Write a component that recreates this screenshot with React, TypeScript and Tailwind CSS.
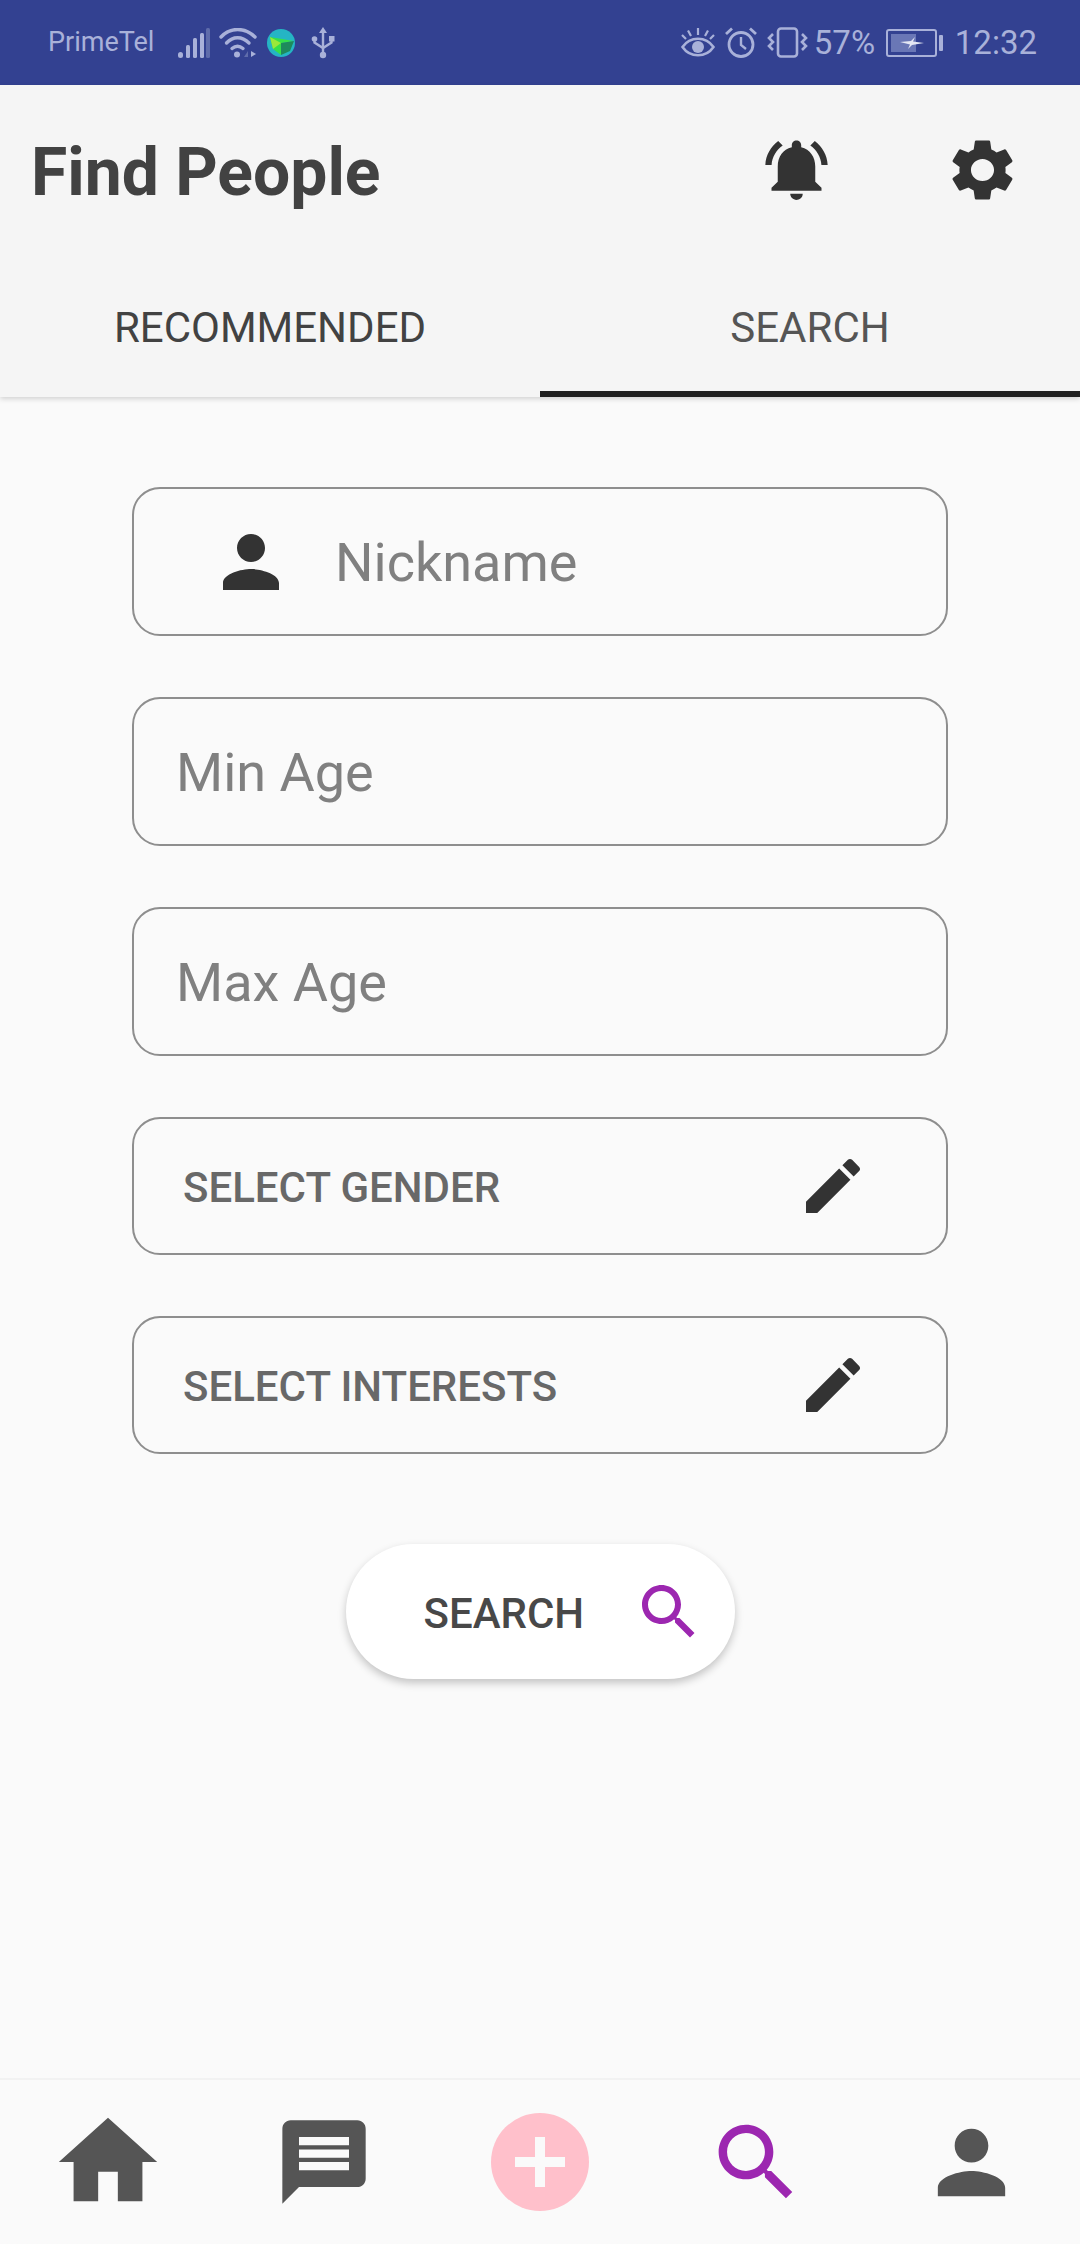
import React from "react";

const paths = {
    bell: "M7.58 4.08L6.15 2.65C3.75 4.48 2.17 7.3 2.03 10.5h2c.15-2.65 1.51-4.97 3.55-6.42zm12.39 6.42h2c-.15-3.2-1.73-6.02-4.12-7.85l-1.42 1.43c2.02 1.45 3.39 3.77 3.54 6.42zM18 11c0-3.07-1.64-5.64-4.5-6.32V4c0-.83-.67-1.5-1.5-1.5s-1.5.67-1.5 1.5v.68C7.63 5.36 6 7.92 6 11v5l-2 2v1h16v-1l-2-2v-5zm-6 11c.14 0 .27-.01.4-.04.65-.14 1.18-.58 1.44-1.18.1-.24.15-.5.15-.78h-4c.01 1.1.9 2 2.01 2z",
    gear: "M19.14 12.94c.04-.3.06-.61.06-.94 0-.32-.02-.64-.07-.94l2.03-1.58c.18-.14.23-.41.12-.61l-1.92-3.32c-.12-.22-.37-.29-.59-.22l-2.39.96c-.5-.38-1.03-.7-1.62-.94l-.36-2.54c-.04-.24-.24-.41-.48-.41h-3.84c-.24 0-.43.17-.47.41l-.36 2.54c-.59.24-1.13.57-1.62.94l-2.39-.96c-.22-.08-.47 0-.59.22L2.74 8.87c-.12.21-.08.47.12.61l2.03 1.58c-.05.3-.09.63-.09.94s.02.64.07.94l-2.03 1.58c-.18.14-.23.41-.12.61l1.92 3.32c.12.22.37.29.59.22l2.39-.96c.5.38 1.03.7 1.62.94l.36 2.54c.05.24.24.41.48.41h3.84c.24 0 .44-.17.47-.41l.36-2.54c.59-.24 1.13-.56 1.62-.94l2.39.96c.22.08.47 0 .59-.22l1.92-3.32c.12-.22.07-.47-.12-.61l-2.01-1.58zM12 15.6c-1.98 0-3.6-1.62-3.6-3.6s1.62-3.6 3.6-3.6 3.6 1.62 3.6 3.6-1.62 3.6-3.6 3.6z",
    person: "M12 12c2.21 0 4-1.79 4-4s-1.79-4-4-4-4 1.79-4 4 1.79 4 4 4zm0 2c-2.67 0-8 1.34-8 4v2h16v-2c0-2.66-5.33-4-8-4z",
    edit: "M3 17.25V21h3.75L17.81 9.94l-3.75-3.75L3 17.25zM20.71 7.04c.39-.39.39-1.02 0-1.41l-2.34-2.34c-.39-.39-1.02-.39-1.41 0l-1.83 1.83 3.75 3.75 1.83-1.83z",
    search: "M15.5 14h-.79l-.28-.27C15.41 12.59 16 11.11 16 9.5 16 5.91 13.09 3 9.5 3S3 5.91 3 9.5 5.91 16 9.5 16c1.61 0 3.09-.59 4.23-1.57l.27.28v.79l5 4.99L20.49 19l-4.99-5zm-6 0C7.01 14 5 11.99 5 9.5S7.01 5 9.5 5 14 7.01 14 9.5 11.99 14 9.5 14z",
    home: "M10 20v-6h4v6h5v-8h3L12 3 2 12h3v8z",
    message: "M20 2H4c-1.1 0-1.99.9-1.99 2L2 22l4-4h14c1.1 0 2-.9 2-2V4c0-1.1-.9-2-2-2zm-2 12H6v-2h12v2zm0-3H6V9h12v2zm0-3H6V6h12v2z",
};

function Icon({ d, className, stretch }: { d: string; className: string; stretch?: boolean }) {
    return (
        <svg
            viewBox="0 0 24 24"
            fill="currentColor"
            preserveAspectRatio={stretch ? "none" : undefined}
            className={className}
        >
            <path d={d} />
        </svg>
    );
}

function StatusBar() {
    return (
        <div className="h-[85px] bg-[#334191] text-[#a9b1d9] flex items-center justify-between pl-[48px] pr-[43px] font-['Roboto',sans-serif]">
            <div className="flex items-center">
                <span className="text-[27px] leading-none w-[130px]">PrimeTel</span>
                {/* signal */}
                <svg viewBox="0 0 32 30" className="w-[32px] h-[30px]">
                    <rect x="0" y="24" width="5" height="6" rx="2.5" fill="#a9b1d9" />
                    <rect x="8" y="17" width="4" height="13" rx="1.5" fill="#a9b1d9" />
                    <rect x="15" y="10" width="4" height="20" rx="1.5" fill="#a9b1d9" />
                    <rect x="22" y="5" width="4" height="25" rx="1.5" fill="#a9b1d9" />
                    <rect x="28" y="0" width="4" height="30" rx="1.5" fill="#5f6cab" />
                </svg>
                {/* wifi */}
                <svg viewBox="0 0 38 30" fill="none" stroke="#a9b1d9" strokeWidth="3.4" strokeLinecap="round" className="w-[38px] h-[30px] ml-[9px]">
                    <path d="M2 9C11 -1 26 -1 36 9" />
                    <path d="M7.5 15C14 8 23 8 30 15" />
                    <path d="M13 20.5C16.5 17.5 20.5 17.5 24 20.5" />
                    <circle cx="18" cy="26.5" r="3" fill="#a9b1d9" stroke="none" />
                    <path d="M29 29V23L25 29Z" fill="#5f6cab" stroke="none" />
                    <path d="M32 23V29L37 26Z" fill="#a9b1d9" stroke="none" />
                </svg>
                {/* vpn globe */}
                <svg viewBox="0 0 30 30" className="w-[30px] h-[30px] ml-[9px]">
                    <circle cx="15" cy="15" r="14" fill="#25b5c4" />
                    <path d="M4 9L28 13L16 15L15 27L7 21Z" fill="#35e04a" />
                    <path d="M15 15L28 13L24 23L15 27Z" fill="#1e8a5c" />
                    <path d="M4 9L15 15L7 21Z" fill="#9be83a" />
                </svg>
                {/* usb */}
                <svg viewBox="0 0 24 32" fill="none" stroke="#a9b1d9" strokeWidth="2.4" className="w-[24px] h-[32px] ml-[15px]">
                    <path d="M12 5V27" />
                    <path d="M12 0L16 6H8Z" fill="#a9b1d9" stroke="none" />
                    <circle cx="12" cy="28" r="3.2" fill="#a9b1d9" stroke="none" />
                    <circle cx="3.5" cy="12" r="2.8" fill="#a9b1d9" stroke="none" />
                    <rect x="18" y="9" width="5.5" height="5.5" fill="#a9b1d9" stroke="none" />
                    <path d="M3.5 13V15.5L12 21L20.5 15.5V13" />
                </svg>
            </div>
            <div className="flex items-center">
                {/* eye */}
                <svg viewBox="0 0 34 30" fill="none" stroke="#a9b1d9" strokeWidth="2.6" className="w-[34px] h-[30px]">
                    <path d="M1.5 19C9 8 25 8 32.5 19C25 30 9 30 1.5 19Z" />
                    <circle cx="17" cy="19" r="6" fill="#a9b1d9" stroke="none" />
                    <path d="M17 0V7M7 2.5L10 8M27 2.5L24 8M1 7L5 11M33 7L29 11" strokeWidth="2.2" />
                </svg>
                {/* alarm */}
                <svg viewBox="0 0 32 31" fill="none" stroke="#a9b1d9" strokeWidth="2.8" className="w-[32px] h-[31px] ml-[10px]">
                    <circle cx="16" cy="17.5" r="12" />
                    <path d="M16 10V18L21 22" strokeWidth="2.4" />
                    <path d="M1 7L7 1.5M31 7L25 1.5" />
                </svg>
                {/* vibrate */}
                <svg viewBox="0 0 41 31" fill="none" stroke="#a9b1d9" strokeWidth="2.6" className="w-[41px] h-[31px] ml-[10px]">
                    <rect x="11" y="1.5" width="19" height="28" rx="3" />
                    <path d="M6 7L2 11L6 15L2 19L6 23" />
                    <path d="M35 7L39 11L35 15L39 19L35 23" />
                </svg>
                <span className="text-[33px] leading-none ml-[6px] w-[72px]">57%</span>
                {/* battery */}
                <div className="flex items-center">
                    <div className="relative w-[51px] h-[28px] border-2 border-[#a9b1d9] rounded-[3px] p-[3px]">
                        <div className="w-[25px] h-full bg-[#6a77b6]" />
                        <svg viewBox="0 0 24 12" className="absolute left-[12px] top-[6px] w-[24px] h-[12px]">
                            <path d="M0 5L11 4L15 0L13 4.500L24 6L12 8L8 12L10 7.500Z" fill="#e4e7f4" />
                        </svg>
                    </div>
                    <div className="w-[4px] h-[16px] ml-[2px] bg-[#a9b1d9] rounded-[1px]" />
                </div>
                <span className="text-[33px] leading-none ml-[12px]">12:32</span>
            </div>
        </div>
    );
}

function Header() {
    return (
        <div className="bg-[#f5f5f5] shadow-[0_2px_5px_rgba(0,0,0,0.16)] relative">
            <div className="h-[169px] flex items-center justify-between pl-[31px] pr-[59px]">
                <h1 className="text-[66px] font-bold leading-none text-[#424242] mt-[7px]">Find People</h1>
                <div className="flex items-center gap-[110px] text-[#333333]">
                    <Icon d={paths.bell} className="w-[75px] h-[73px]" stretch />
                    <Icon d={paths.gear} className="w-[77px] h-[74px]" stretch />
                </div>
            </div>
            <div className="grid grid-cols-2 h-[143px]">
                <div className="flex items-center justify-center text-[42px] text-[#424242] pt-[10px] border-b-[6px] border-transparent">RECOMMENDED</div>
                <div className="flex items-center justify-center text-[42px] text-[#555555] pt-[10px] border-b-[6px] border-[#212121]">SEARCH</div>
            </div>
        </div>
    );
}

function TextField({ label, withIcon }: { label: string; withIcon?: boolean }) {
    return (
        <div className="h-[149px] flex items-center border-2 border-[#8e8e8e] rounded-[28px] pl-[42px]">
            {withIcon && (
                <Icon d={paths.person} className="w-[84px] h-[84px] text-[#333333] ml-[33px] mr-[42px]" />
            )}
            <span className="text-[54px] text-[#808080] mt-[2px]">{label}</span>
        </div>
    );
}

function SelectField({ label }: { label: string }) {
    return (
        <div className="h-[138px] flex items-center justify-between border-2 border-[#8e8e8e] rounded-[28px] pl-[49px] pr-[77px]">
            <span className="text-[42px] font-medium text-[#686868] mt-[3px]">{label}</span>
            <Icon d={paths.edit} className="w-[72px] h-[72px] text-[#333333] -mt-[1px]" />
        </div>
    );
}

function BottomNav() {
    return (
        <div className="h-[166px] border-t-2 border-[#f2f2f2] grid grid-cols-5 items-center text-[#555555]">
            <div className="flex justify-center">
                <Icon d={paths.home} className="w-[118px] h-[118px]" />
            </div>
            <div className="flex justify-center">
                <Icon d={paths.message} className="w-[100px] h-[100px]" />
            </div>
            <div className="flex justify-center">
                <div className="relative w-[98px] h-[98px] rounded-full bg-[#ffc0cb] flex items-center justify-center">
                    <div className="w-[50px] h-[10px] bg-[#fafafa]" />
                    <div className="absolute w-[10px] h-[50px] bg-[#fafafa]" />
                </div>
            </div>
            <div className="flex justify-center">
                <Icon d={paths.search} className="w-[101px] h-[101px] text-[#9c27b0]" />
            </div>
            <div className="flex justify-center pr-[2px]">
                <Icon d={paths.person} className="w-[101px] h-[101px]" />
            </div>
        </div>
    );
}

export default function App() {
    return (
        <div className="w-[1080px] h-[2244px] flex flex-col bg-[#fafafa] font-['Roboto',sans-serif] overflow-hidden">
            <StatusBar />
            <Header />
            <div className="flex-1 px-[132px] pt-[90px] flex flex-col">
                <div className="flex flex-col gap-[61px]">
                    <TextField label="Nickname" withIcon />
                    <TextField label="Min Age" />
                    <TextField label="Max Age" />
                    <SelectField label="SELECT GENDER" />
                    <SelectField label="SELECT INTERESTS" />
                </div>
                <div className="flex justify-center mt-[90px]">
                    <div className="w-[389px] h-[135px] rounded-full bg-white shadow-[0_4px_8px_rgba(0,0,0,0.22)] flex items-center pl-[78px]">
                        <span className="text-[42px] font-medium text-[#484848] w-[209px] mt-[3px]">SEARCH</span>
                        <Icon d={paths.search} className="w-[72px] h-[72px] text-[#9c27b0]" />
                    </div>
                </div>
            </div>
            <BottomNav />
        </div>
    );
}
